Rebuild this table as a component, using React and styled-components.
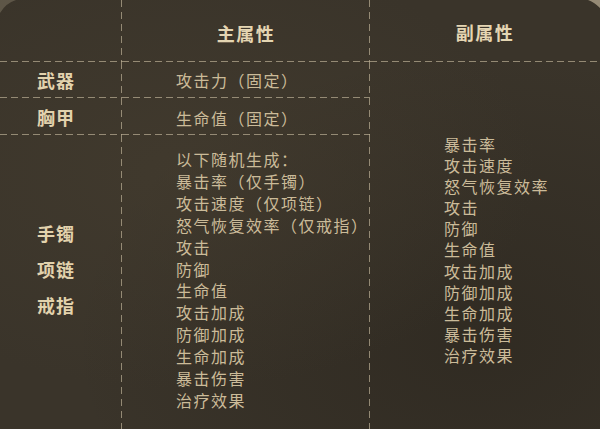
import React from 'react';
import styled, { createGlobalStyle } from 'styled-components';

const LINE = 'rgba(186, 174, 148, 0.7)';

const GlobalStyle = createGlobalStyle`
  html, body {
    margin: 0;
    padding: 0;
    background: #3a342a;
  }
  body {
    font-family: "Noto Sans CJK SC", "Noto Sans", sans-serif;
  }
`;

const Board = styled.div`
  position: relative;
  width: 600px;
  height: 429px;
  overflow: hidden;
  background:
    radial-gradient(ellipse at 30% 40%, rgba(70, 62, 48, 0.55), transparent 60%),
    radial-gradient(ellipse at 80% 80%, rgba(30, 26, 20, 0.35), transparent 60%),
    #3a342a;
  display: grid;
  grid-template-columns: 122px 248px 1fr;
  grid-template-rows: 62px 36px 37px 1fr;
`;

const dashH = `repeating-linear-gradient(90deg, ${LINE} 0 7px, transparent 7px 11px)`;
const dashV = `repeating-linear-gradient(180deg, ${LINE} 0 7px, transparent 7px 12px)`;

const Cell = styled.div`
  display: flex;
  flex-direction: column;
  align-items: ${p => (p.$center ? 'center' : 'flex-start')};
  justify-content: ${p => (p.$middle ? 'center' : 'flex-start')};
  box-sizing: border-box;
  padding: ${p => p.$pad || '0'};
  grid-column: ${p => p.$col || 'auto'};
  grid-row: ${p => p.$row || 'auto'};
  background-image: ${p =>
    [p.$bottom && dashH, p.$right && dashV].filter(Boolean).join(', ') || 'none'};
  background-size: ${p =>
    [p.$bottom && '100% 1px', p.$right && '1px 100%'].filter(Boolean).join(', ') || 'auto'};
  background-position: ${p =>
    [p.$bottom && 'left bottom', p.$right && 'right top'].filter(Boolean).join(', ') || '0 0'};
  background-repeat: no-repeat;
`;

const Heading = styled.div`
  font-size: 18px;
  font-weight: 700;
  letter-spacing: 1.5px;
  color: #e4d5b2;
`;

const Label = styled.div`
  font-size: 18px;
  font-weight: 700;
  letter-spacing: 1px;
  color: #e2d2ad;
  line-height: 36px;
`;

const Item = styled.div`
  font-size: 16px;
  letter-spacing: 1.5px;
  color: #cbbb99;
  line-height: ${p => p.$lh || '22px'};
  white-space: nowrap;
`;

const Corner = styled.svg`
  position: absolute;
  top: 0;
  ${p => (p.$right ? 'right: 0;' : 'left: 0;')}
  width: 20px;
  height: 14px;
  pointer-events: none;
`;

const mainList = [
  '以下随机生成：',
  '暴击率（仅手镯）',
  '攻击速度（仅项链）',
  '怒气恢复效率（仅戒指）',
  '攻击',
  '防御',
  '生命值',
  '攻击加成',
  '防御加成',
  '生命加成',
  '暴击伤害',
  '治疗效果',
];

const subList = [
  '暴击率',
  '攻击速度',
  '怒气恢复效率',
  '攻击',
  '防御',
  '生命值',
  '攻击加成',
  '防御加成',
  '生命加成',
  '暴击伤害',
  '治疗效果',
];

export default function App() {
  return (
    <>
      <GlobalStyle />
      <Board>
        <Corner viewBox="0 0 20 14">
          <path d="M0 13 Q6 3 16 0 L20 0 L0 0 Z" fill="rgba(200,186,158,0.25)" />
        </Corner>
        <Corner $right viewBox="0 0 20 14">
          <path d="M8 0 Q14 2 20 8 L20 0 Z" fill="rgba(210,196,168,0.6)" />
        </Corner>

        <Cell $col="1" $row="1" $bottom $right />
        <Cell $col="2" $row="1" $bottom $right $center $middle $pad="4px 0 0 0">
          <Heading>主属性</Heading>
        </Cell>
        <Cell $col="3" $row="1" $bottom $center $middle $pad="2px 0 0 0">
          <Heading>副属性</Heading>
        </Cell>

        <Cell $col="1" $row="2" $bottom $right $center $middle $pad="0 10px 0 0">
          <Label>武器</Label>
        </Cell>
        <Cell $col="2" $row="2" $bottom $right $middle $pad="0 0 0 54px">
          <Item>攻击力（固定）</Item>
        </Cell>

        <Cell $col="1" $row="3" $bottom $right $center $middle $pad="0 10px 0 0">
          <Label>胸甲</Label>
        </Cell>
        <Cell $col="2" $row="3" $bottom $right $middle $pad="2px 0 0 54px">
          <Item>生命值（固定）</Item>
        </Cell>

        <Cell $col="1" $row="4" $right $center $pad="80px 10px 0 0">
          <Label>手镯</Label>
          <Label>项链</Label>
          <Label>戒指</Label>
        </Cell>
        <Cell $col="2" $row="4" $right $pad="14px 0 0 54px">
          {mainList.map(t => (
            <Item key={t} $lh="21.9px">{t}</Item>
          ))}
        </Cell>

        <Cell $col="3" $row="2 / 5" $pad="72px 0 0 74px">
          {subList.map(t => (
            <Item key={t} $lh="21.1px">{t}</Item>
          ))}
        </Cell>
      </Board>
    </>
  );
}
